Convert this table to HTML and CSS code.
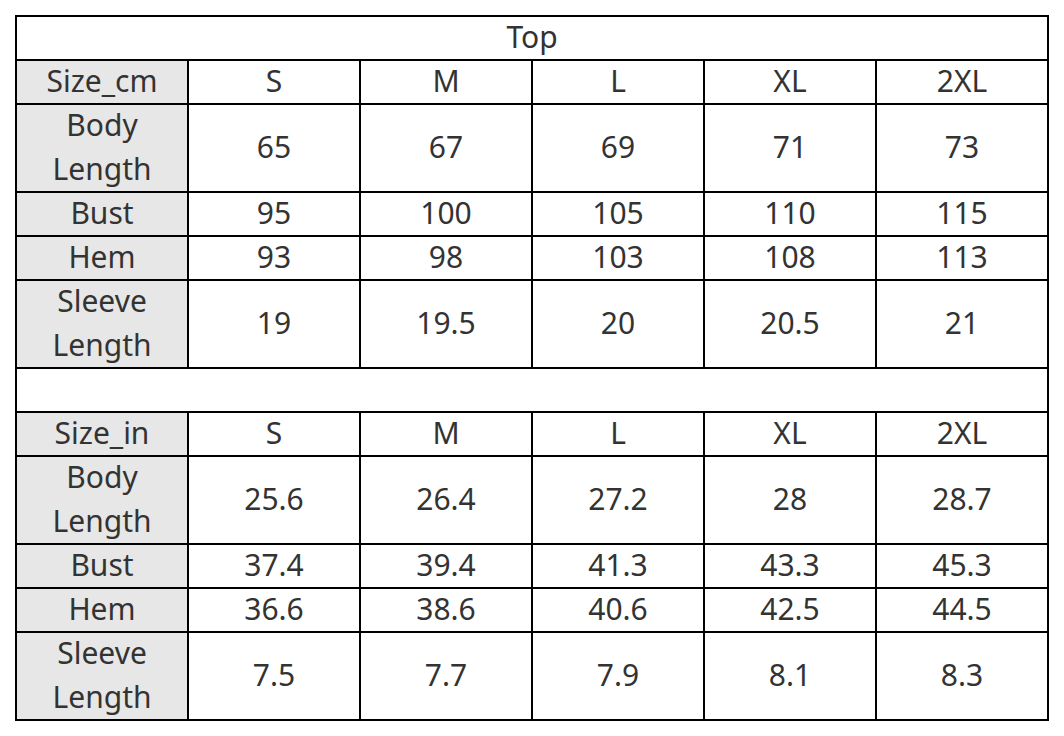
FILE: index.html
```html
<!DOCTYPE html>
<html>
<head>
<meta charset="utf-8">
<link rel="stylesheet" href="styles.css">
</head>
<body>
<div class="sheet">
  <div class="c full">Top</div>

  <div class="c h">Size_cm</div><div class="c">S</div><div class="c">M</div><div class="c">L</div><div class="c">XL</div><div class="c">2XL</div>
  <div class="c h tall">Body<br>Length</div><div class="c tall">65</div><div class="c tall">67</div><div class="c tall">69</div><div class="c tall">71</div><div class="c tall">73</div>
  <div class="c h">Bust</div><div class="c">95</div><div class="c">100</div><div class="c">105</div><div class="c">110</div><div class="c">115</div>
  <div class="c h">Hem</div><div class="c">93</div><div class="c">98</div><div class="c">103</div><div class="c">108</div><div class="c">113</div>
  <div class="c h tall">Sleeve<br>Length</div><div class="c tall">19</div><div class="c tall">19.5</div><div class="c tall">20</div><div class="c tall">20.5</div><div class="c tall">21</div>

  <div class="c full"></div>

  <div class="c h">Size_in</div><div class="c">S</div><div class="c">M</div><div class="c">L</div><div class="c">XL</div><div class="c">2XL</div>
  <div class="c h tall">Body<br>Length</div><div class="c tall">25.6</div><div class="c tall">26.4</div><div class="c tall">27.2</div><div class="c tall">28</div><div class="c tall">28.7</div>
  <div class="c h">Bust</div><div class="c">37.4</div><div class="c">39.4</div><div class="c">41.3</div><div class="c">43.3</div><div class="c">45.3</div>
  <div class="c h">Hem</div><div class="c">36.6</div><div class="c">38.6</div><div class="c">40.6</div><div class="c">42.5</div><div class="c">44.5</div>
  <div class="c h tall">Sleeve<br>Length</div><div class="c tall">7.5</div><div class="c tall">7.7</div><div class="c tall">7.9</div><div class="c tall">8.1</div><div class="c tall">8.3</div>
</div>
</body>
</html>
```
FILE: styles.css
```css
html, body {
  margin: 0;
  padding: 0;
  background: #ffffff;
}
body {
  padding: 15px 0 0 15px;
}
.sheet {
  display: grid;
  grid-template-columns: repeat(6, 170px);
  grid-auto-rows: 42px;
  gap: 2px;
  padding: 2px;
  background: #000000;
  width: 1030px;
  font-family: "Noto Sans", "Open Sans", sans-serif;
  font-size: 30px;
  color: #333333;
}
.c {
  background: #ffffff;
  display: flex;
  align-items: center;
  justify-content: center;
  text-align: center;
  line-height: 44px;
  padding-bottom: 2px;
}
.full {
  grid-column: 1 / -1;
}
.tall {
  grid-row: span 2;
}
.h {
  background: #e7e7e7;
}
```
